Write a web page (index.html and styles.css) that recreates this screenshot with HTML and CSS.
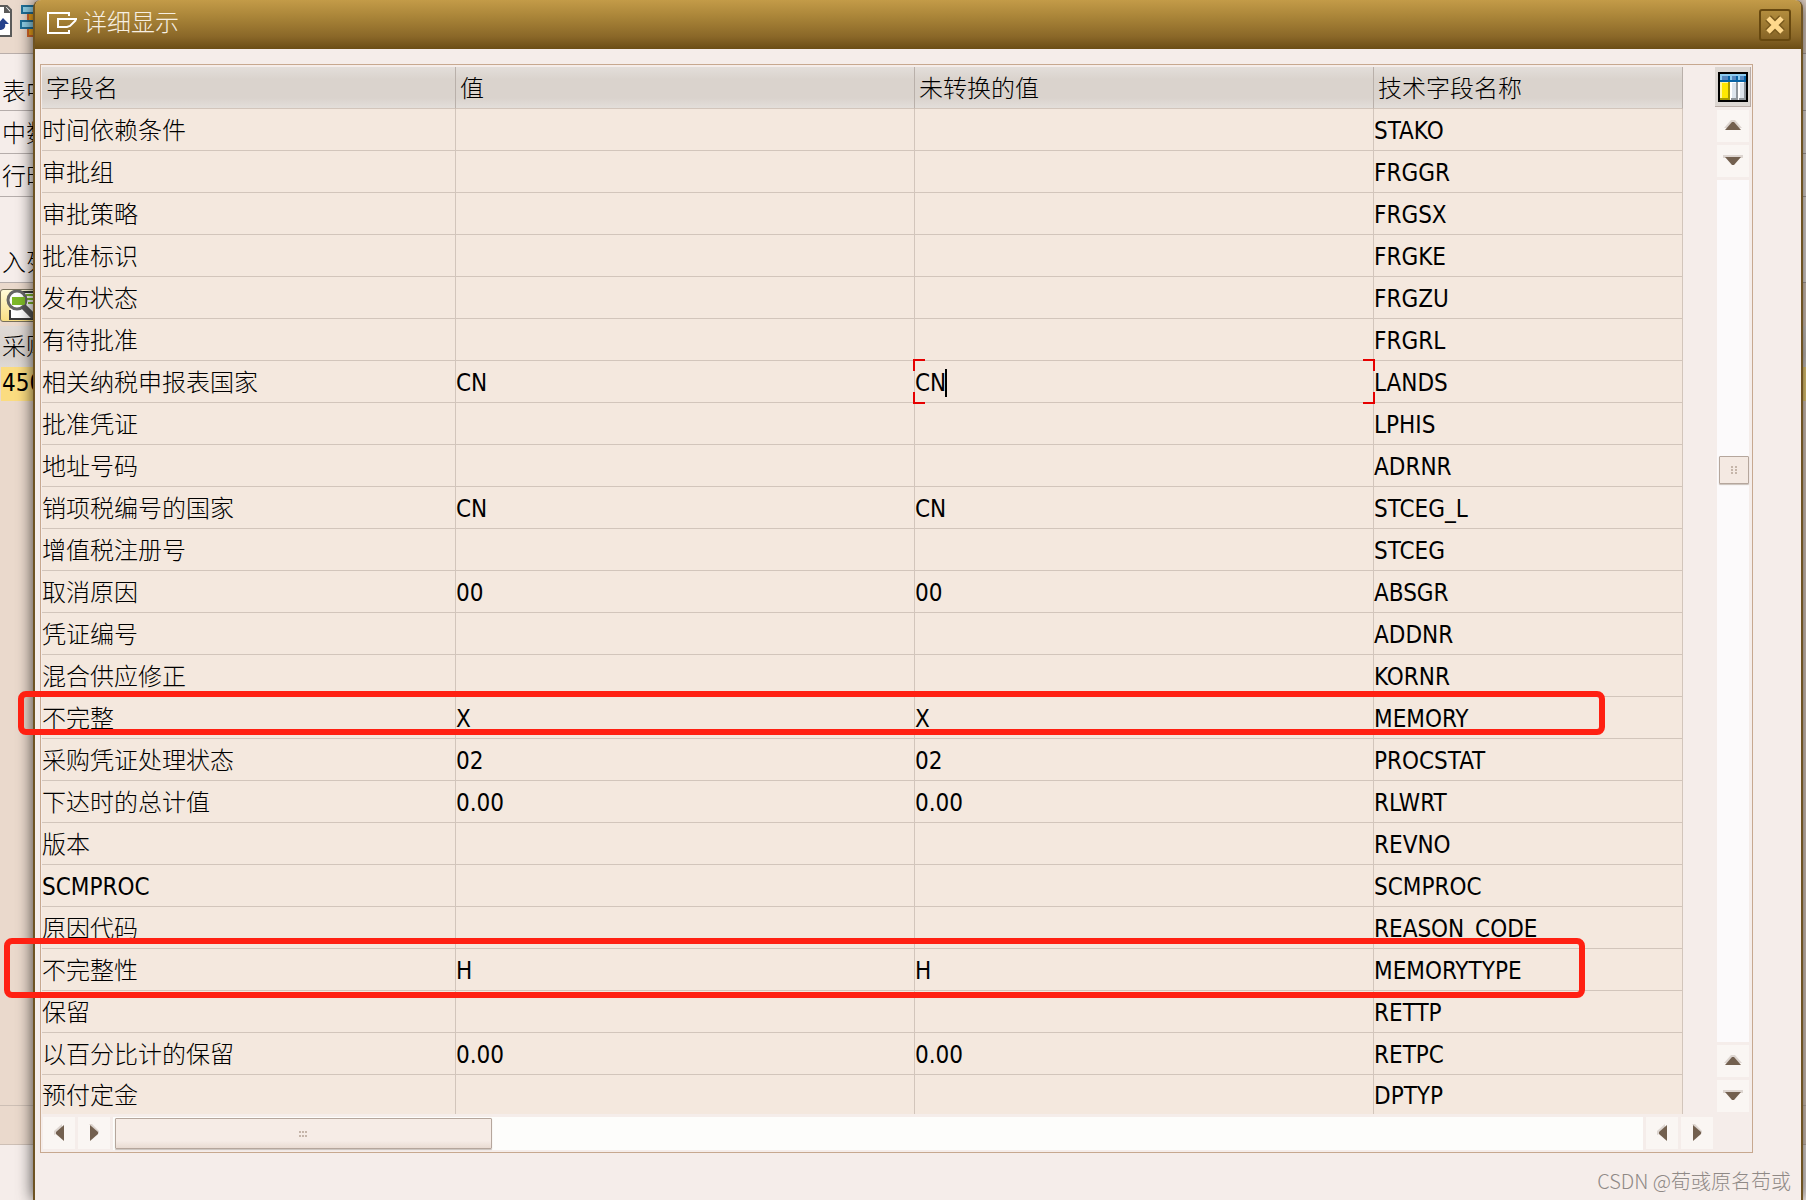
FILE: index.html
```html
<!DOCTYPE html>
<html lang="zh-CN">
<head>
<meta charset="utf-8">
<title>详细显示</title>
<link rel="stylesheet" href="styles.css">
</head>
<body>
<div class="desktop">
  <div class="app">
    <div class="app-tools">
      <svg width="34" height="54" viewBox="0 0 34 54"><path d="M-8 6H7l4 4v26H-8z" fill="#fff" stroke="#5a5a5a" stroke-width="2"/><path d="M4 5v8h7z" fill="#5a5a5a"/><path d="M0 30c4 0 6-3 5-6h4l-6-6-5 6h2c0 3 0 4-2 4z" fill="#24418c"/><path d="M28 13h8v23h-8z" fill="#f5a81c" stroke="#d9682c" stroke-width="2"/><path d="M22 6h14v7H22zM21 21h14v7H21z" fill="#8fd0e8" stroke="#1f6f98" stroke-width="2"/></svg>
    </div>
    <div class="app-line first"><span>表中</span></div>
    <div class="app-line"><span>中数</span></div>
    <div class="app-line"><span>行时</span></div>
    <div class="app-line last"><span>入列</span></div>
    <div class="app-buttons"><button class="find" aria-label="查找"><svg width="34" height="32" viewBox="0 0 34 32"><path d="M9 20v9h25V2H20" fill="#fff" stroke="#3a3a3a" stroke-width="2"/><path d="M25 5h9M26 9h8M27 13h7" stroke="#7db928" stroke-width="2"/><circle cx="16" cy="10" r="9" fill="#fff" stroke="#666" stroke-width="3"/><path d="M11 7h13v8H11z" fill="#7db928"/><path d="M22 16l11 11" stroke="#555" stroke-width="6"/></svg></button></div>
    <div class="app-head"><span>采购</span></div>
    <div class="app-sel"><span>450</span></div>
    <div class="app-fill"></div>
    <div class="app-status"></div>
    <div class="app-base"></div>
  </div>

  <section class="dialog" aria-label="详细显示">
    <header class="titlebar">
      <svg class="title-icon" width="31" height="22" viewBox="0 0 31 22" fill="none" stroke="#fff" stroke-width="2"><path d="M22 4V1H1v20h21v-3"/><path d="M30 7H11v8h9l3-1 6-6"/></svg>
      <h1>详细显示</h1>
      <button class="close" aria-label="关闭"><svg width="20" height="20" viewBox="0 0 20 20"><path d="M3 3l14 14M17 3L3 17" stroke="#7a5a1e" stroke-width="8"/><path d="M3 3l14 14M17 3L3 17" stroke="#ffd88c" stroke-width="5"/></svg></button>
    </header>
    <div class="frame">
      <div class="upper">
        <table>
          <colgroup><col class="c-name"><col class="c-val"><col class="c-val"><col></colgroup>
          <thead><tr><th>字段名</th><th>值</th><th>未转换的值</th><th>技术字段名称</th></tr></thead>
          <tbody>
            <tr><td>时间依赖条件</td><td></td><td></td><td>STAKO</td></tr>
            <tr><td>审批组</td><td></td><td></td><td>FRGGR</td></tr>
            <tr><td>审批策略</td><td></td><td></td><td>FRGSX</td></tr>
            <tr><td>批准标识</td><td></td><td></td><td>FRGKE</td></tr>
            <tr><td>发布状态</td><td></td><td></td><td>FRGZU</td></tr>
            <tr><td>有待批准</td><td></td><td></td><td>FRGRL</td></tr>
            <tr><td>相关纳税申报表国家</td><td>CN</td><td class="active"><div class="edit"><input type="text" value="CN" aria-label="未转换的值"><span class="caret"></span></div><i class="corner tl"></i><i class="corner tr"></i><i class="corner bl"></i><i class="corner br"></i></td><td>LANDS</td></tr>
            <tr><td>批准凭证</td><td></td><td></td><td>LPHIS</td></tr>
            <tr><td>地址号码</td><td></td><td></td><td>ADRNR</td></tr>
            <tr><td>销项税编号的国家</td><td>CN</td><td>CN</td><td>STCEG_L</td></tr>
            <tr><td>增值税注册号</td><td></td><td></td><td>STCEG</td></tr>
            <tr><td>取消原因</td><td>00</td><td>00</td><td>ABSGR</td></tr>
            <tr><td>凭证编号</td><td></td><td></td><td>ADDNR</td></tr>
            <tr><td>混合供应修正</td><td></td><td></td><td>KORNR</td></tr>
            <tr><td>不完整</td><td>X</td><td>X</td><td>MEMORY</td></tr>
            <tr><td>采购凭证处理状态</td><td>02</td><td>02</td><td>PROCSTAT</td></tr>
            <tr><td>下达时的总计值</td><td>0.00</td><td>0.00</td><td>RLWRT</td></tr>
            <tr><td>版本</td><td></td><td></td><td>REVNO</td></tr>
            <tr><td>SCMPROC</td><td></td><td></td><td>SCMPROC</td></tr>
            <tr><td>原因代码</td><td></td><td></td><td>REASON_CODE</td></tr>
            <tr><td>不完整性</td><td>H</td><td>H</td><td>MEMORYTYPE</td></tr>
            <tr><td>保留</td><td></td><td></td><td>RETTP</td></tr>
            <tr><td>以百分比计的保留</td><td>0.00</td><td>0.00</td><td>RETPC</td></tr>
            <tr class="cut"><td>预付定金</td><td></td><td></td><td>DPTYP</td></tr>
          </tbody>
        </table>
        <div class="vbar">
          <button class="layout" aria-label="选择布局"><svg width="30" height="30" viewBox="0 0 30 30" shape-rendering="crispEdges"><path fill="#000" d="M0 0h30v30H0z"/><path fill="#8ccbf0" d="M2 2h26v8H2z"/><path fill="#5587c0" d="M4 4h8v4H4zM14 4h5v4h-5zM22 4h6v4h-6z"/><path fill="#0763a5" d="M2 8h26v2H2zM10 4h2v4h-2zM18 4h2v4h-2zM26 4h2v4h-2z"/><path fill="#fff59a" d="M2 10h10v18H2z"/><path fill="#ffe800" d="M4 11h6v15H4z"/><path fill="#a89a00" d="M10 10h2v18h-2zM2 26h10v2H2z"/><path fill="#fff" d="M12 10h16v18H12z"/><path fill="#dde5ed" d="M14 11h4v15h-4zM22 11h4v15h-4z"/><path fill="#8f969c" d="M18 10h2v18h-2zM26 10h2v18h-2zM13 26h6v2h-6zM21 26h7v2h-7z"/></svg></button>
          <button class="arrow" aria-label="向上"><svg width="20" height="10" viewBox="0 0 20 10"><path class="halo" d="M1 8L8 0h4l7 8z"/><path d="M2 10L9 2h2l7 8z"/></svg></button>
          <button class="arrow" aria-label="向下"><svg width="20" height="10" viewBox="0 0 20 10"><path class="halo" d="M0 0h20v3H0z"/><path d="M2 2h16l-7 8H9z"/></svg></button>
          <div class="vtrack"><button class="vthumb" aria-label="垂直滚动"><svg width="8" height="10" viewBox="0 0 8 10"><path class="grip" d="M1 1h2v2H1zM5 1h2v2H5zM1 4h2v2H1zM5 4h2v2H5zM1 7h2v2H1zM5 7h2v2H5z"/></svg></button></div>
          <button class="arrow" aria-label="向上"><svg width="20" height="10" viewBox="0 0 20 10"><path class="halo" d="M1 8L8 0h4l7 8z"/><path d="M2 10L9 2h2l7 8z"/></svg></button>
          <button class="arrow" aria-label="向下"><svg width="20" height="10" viewBox="0 0 20 10"><path class="halo" d="M0 0h20v3H0z"/><path d="M2 2h16l-7 8H9z"/></svg></button>
        </div>
      </div>
      <div class="hbar">
        <button class="arrow" aria-label="向左"><svg width="10" height="20" viewBox="0 0 10 20"><path class="halo" d="M8 1L0 8v4l8-4z"/><path d="M10 2v16L2 11V9z"/></svg></button>
        <button class="arrow" aria-label="向右"><svg width="10" height="20" viewBox="0 0 10 20"><path class="halo" d="M0 1h3l7 7v3z"/><path d="M1 2v16l8-7V9z"/></svg></button>
        <div class="htrack"><button class="hthumb" aria-label="水平滚动"><svg width="9" height="8" viewBox="0 0 9 8"><path class="grip" d="M0 1h2v2H0zM3 1h2v2H3zM6 1h2v2H6zM0 5h2v2H0zM3 5h2v2H3zM6 5h2v2H6z"/></svg></button></div>
        <button class="arrow" aria-label="向左"><svg width="10" height="20" viewBox="0 0 10 20"><path class="halo" d="M8 1L0 8v4l8-4z"/><path d="M10 2v16L2 11V9z"/></svg></button>
        <button class="arrow" aria-label="向右"><svg width="10" height="20" viewBox="0 0 10 20"><path class="halo" d="M0 1h3l7 7v3z"/><path d="M1 2v16l8-7V9z"/></svg></button>
      </div>
    </div>
    <footer>CSDN @荀彧原名苟或</footer>
  </section>
  <div class="mark mark-memory"></div>
  <div class="mark mark-type"></div>
</div>
</body>
</html>
```
FILE: styles.css
```css
* { box-sizing: border-box; }

body {
  margin: 0;
  background: #f5edea;
  color: #000;
  font-family: "DejaVu Sans Condensed", "Noto Sans CJK SC", sans-serif;
  font-size: 24px;
  font-weight: 300;
  line-height: 32px;
}

button { padding: 0; border: 0; background: none; font: inherit; flex: none; }
svg { display: block; flex: none; }

.desktop {
  position: relative;
  display: grid;
  grid-template-columns: minmax(0, 1fr);
  min-height: 100vh;
  overflow: hidden;
}
.app, .dialog { grid-area: 1 / 1; }

/* Application behind the dialog */
.app { display: flex; flex-direction: column; white-space: nowrap; }
.app span { display: block; width: 31px; overflow: hidden; }
.app-tools { height: 54px; background: #ead9cc; border-bottom: 1px solid #b9aeaa; }
.app-line { height: 43px; padding: 7px 2px 0; border-bottom: 1px solid #b5adab; }
.app-line.first { height: 57px; padding-top: 22px; }
.app-line.last { height: 86px; padding-top: 50px; }
.app-buttons { height: 43px; padding-top: 6px; background: #ead9cc; }
.find {
  width: 60px;
  height: 33px;
  overflow: hidden;
  border: 1px solid #77705c;
  border-radius: 3px;
  background: linear-gradient(#fffbd8, #f8df84);
}
.app-head { height: 41px; padding: 5px 2px; background: linear-gradient(#dfdad6, #d8d1cb 70%, #dfd9d5); }
.app-sel { height: 34px; padding: 0 1px; background: #fbdc80; border-left: 1px solid #ead9cc; }
.app-fill { flex: 1; background: #ead9cc; }
.app-status { height: 40px; background: #ead9cc; border: solid #cdbfb5; border-width: 1px 0; }
.app-base { height: 55px; }

/* Dialog */
.dialog {
  display: flex;
  flex-direction: column;
  margin: 0 3px 0 33px;
  border: solid #6e5323;
  border-width: 0 2px;
  border-radius: 8px 8px 0 0;
  background: #f5edea;
  box-shadow: 0 0 16px rgba(0, 0, 0, .75);
}
.titlebar {
  display: flex;
  align-items: center;
  height: 49px;
  padding: 0 10px 4px 12px;
  border-radius: 6px 6px 0 0;
  background: linear-gradient(#c39b48, #a98438 35%, #8a6728 75%, #6b4d15);
}
.title-icon { margin-right: 5px; }
h1 { flex: 1; margin: 0; color: #f7efe2; font-size: 24px; font-weight: 300; line-height: 32px; }
.close {
  display: grid;
  place-items: center;
  width: 32px;
  height: 32px;
  margin-top: 5px;
  border: 2px solid #67480f;
  border-radius: 3px;
}

.frame { margin: 15px 48px 0 5px; border: 1px solid #c7a88f; padding: 2px 1px; }
.upper { display: flex; justify-content: space-between; gap: 32px; padding-bottom: 2px; }

table {
  flex: 1;
  width: 100%;
  table-layout: fixed;
  border-spacing: 0;
  background: #f4e8de;
}
.c-name { width: 414px; }
.c-val { width: 459px; }
th, td {
  height: 42px;
  padding: 2px 0 0;
  border: solid #d2c5bb;
  border-width: 0 1px 1px 0;
  text-align: left;
  font-weight: 300;
  white-space: nowrap;
}
th {
  padding-left: 4px;
  border-right-color: #b9b0aa;
  background: linear-gradient(#e3deda, #dad3cd 30%, #dad3cd 75%, #e3deda);
}
.cut td { height: 39px; border-bottom: 0; }

.active { position: relative; }
.edit { display: flex; align-items: center; }
.edit input {
  width: 30px;
  height: 32px;
  padding: 0;
  border: 0;
  outline: 0;
  background: none;
  color: inherit;
  font: inherit;
}
.caret { width: 2px; height: 28px; background: #000; }
.corner { position: absolute; width: 12px; height: 12px; border: 0 solid #e60000; }
.tl { top: -2px; left: -2px; border-width: 2px 0 0 2px; }
.tr { top: -2px; right: -2px; border-width: 2px 2px 0 0; }
.bl { bottom: -2px; left: -2px; border-width: 0 0 2px 2px; }
.br { bottom: -2px; right: -2px; border-width: 0 2px 2px 0; }

/* Scroll bars */
.vbar { display: flex; flex-direction: column; align-items: center; gap: 3px; width: 36px; padding-bottom: 2px; }
.layout {
  display: grid;
  place-items: center;
  width: 36px;
  height: 40px;
  border: solid #b9aca6;
  border-width: 0 1px 1px 0;
  background: #ddd7d2;
}
.arrow { display: grid; place-items: center; width: 32px; height: 32px; background: #faf6f3; }
.arrow path { fill: #73604f; }
.arrow .halo { fill: #ddd5d0; }
.vbar .arrow { padding-bottom: 2px; }
.grip { fill: #c5b5a9; }
.vtrack { flex: 1; width: 32px; padding: 276px 0 0 2px; background: #fcfafb; }
.vthumb, .hthumb {
  display: grid;
  place-items: center;
  border: 1px solid #b5a69c;
  border-radius: 1px;
  background: #f4e9e2;
  box-shadow: 0 1px 1px #c9c0ba;
}
.vthumb { width: 30px; height: 28px; }
.hbar { display: flex; gap: 3px; padding: 1px 38px 0 1px; }
.htrack { flex: 1; padding: 1px 2px; background: #fdfdfb; }
.hthumb { width: 377px; height: 31px; background: linear-gradient(#f6ece6 75%, #e9dbd2); }

footer {
  padding: 12px 10px 0;
  color: #8f8986;
  font-family: "Noto Sans CJK SC", sans-serif;
  font-size: 20px;
  line-height: 32px;
  text-align: right;
}

/* Highlight boxes drawn over the rows */
.mark { position: absolute; border: 6px solid #ff2012; border-radius: 8px; }
.mark-memory { left: 18px; top: 691px; width: 1587px; height: 44px; }
.mark-type { left: 4px; top: 938px; width: 1581px; height: 60px; }
```
